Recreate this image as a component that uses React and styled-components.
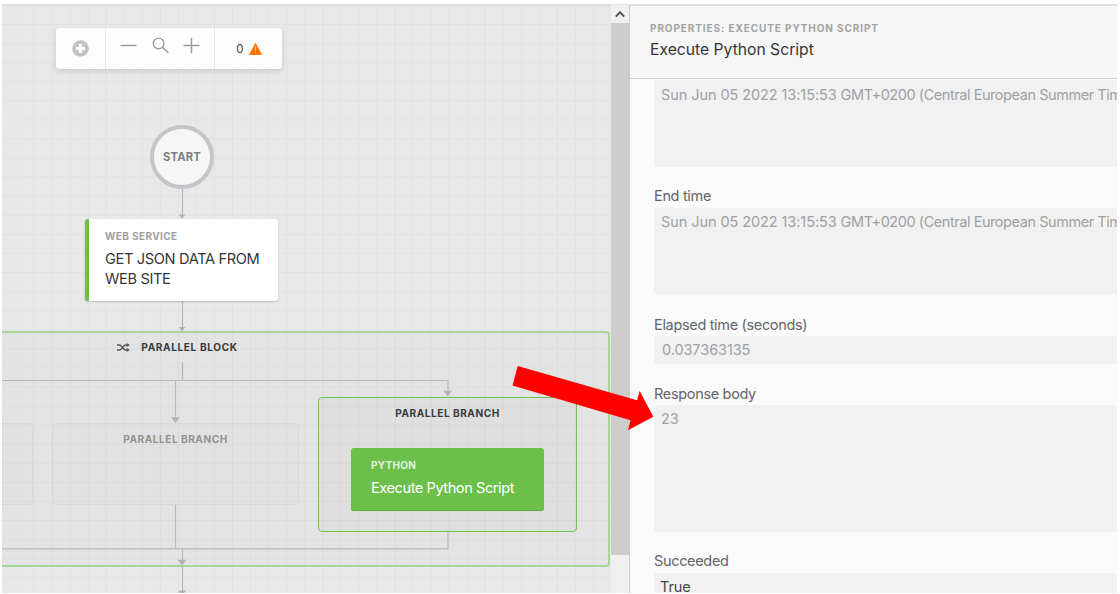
import React from "react";
import styled, { createGlobalStyle } from "styled-components";

const GlobalStyle = createGlobalStyle`
  * { box-sizing: border-box; }
  body { margin: 0; background: #fff; overflow: hidden; font-family: Inter, "Liberation Sans", sans-serif; }
`;

const Page = styled.div`
  position: relative;
  width: 1120px;
  height: 594px;
  padding: 4px 3px 1px 2px;
  overflow: hidden;
  background: #fff;
`;

const Shell = styled.div`
  display: flex;
  height: 589px;
  border-top: 1px solid #e3e3e3;
  overflow: hidden;
`;

const Canvas = styled.main`
  position: relative;
  flex: 0 0 609px;
  overflow: hidden;
  background-color: #e8e8e8;
  background-image:
    linear-gradient(to right, #e1e1e1 1px, transparent 1px),
    linear-gradient(to bottom, #e1e1e1 1px, transparent 1px);
  background-size: 18.05px 19.08px;
  background-position: 13.5px 19px;
  box-shadow: inset 0 1px 0 #dcdcdc;
`;

const Toolbar = styled.div`
  position: absolute;
  left: 54px;
  top: 23px;
  display: flex;
  width: 226px;
  height: 41px;
  background: #fdfdfd;
  border-radius: 3px;
  box-shadow: 0 2px 5px rgba(0, 0, 0, 0.14);
`;

const ToolGroup = styled.div`
  display: flex;
  align-items: center;
  justify-content: center;
  flex: 0 0 ${(p) => p.$width}px;
  gap: ${(p) => p.$gap || 0}px;
  padding-bottom: ${(p) => p.$lift || 0}px;
  padding-left: ${(p) => (p.$last ? 1 : 0)}px;
  border-right: ${(p) => (p.$last ? "0" : "1px solid #e9e9e9")};
  font-size: 11.5px;
  color: #444;
`;

const StartNode = styled.div`
  position: absolute;
  left: 148px;
  top: 120px;
  width: 64px;
  height: 64px;
  display: flex;
  align-items: center;
  justify-content: center;
  border: 4px solid #c4c5c9;
  border-radius: 50%;
  background: #f6f6f6;
  color: #7d7e82;
  font-size: 11.2px;
  font-weight: 700;
  letter-spacing: 0.2px;
`;

const Lines = styled.svg`
  position: absolute;
  left: 0;
  top: 0;
`;

const Card = styled.div`
  position: absolute;
  left: ${(p) => p.$x}px;
  top: ${(p) => p.$y}px;
  width: ${(p) => p.$w}px;
  height: ${(p) => p.$h}px;
  padding: ${(p) => (p.$active ? "11px 20px" : "11px 16px")};
  border-left: ${(p) => (p.$active ? "0" : "4px solid #6cc04a")};
  border-radius: 3px;
  background: ${(p) => (p.$active ? "#6cc04a" : "#fff")};
  color: ${(p) => (p.$active ? "#fff" : "#343537")};
  box-shadow: ${(p) => (p.$active ? "inset 0 -1px 0 #5fab41" : "0 1px 2px rgba(0,0,0,.2)")};
`;

const CardType = styled.div`
  height: 12px;
  line-height: 12px;
  font-size: 10px;
  font-weight: 700;
  letter-spacing: ${(p) => (p.$active ? 0.3 : 0.4)}px;
  opacity: ${(p) => (p.$active ? 0.8 : 1)};
  color: ${(p) => (p.$active ? "#fff" : "#9e9ea2")};
`;

const CardTitle = styled.div`
  margin-top: 7px;
  font-size: 14.6px;
  line-height: 20px;
  letter-spacing: ${(p) => p.$ls}px;
  white-space: nowrap;
`;

const Block = styled.section`
  position: absolute;
  left: ${(p) => p.$x}px;
  top: ${(p) => p.$y}px;
  width: ${(p) => p.$w}px;
  height: ${(p) => p.$h}px;
  border: ${(p) => p.$bw || 1}px solid ${(p) => p.$border};
  border-radius: 4px;
  background: rgba(0, 0, 0, ${(p) => p.$tint});
`;

const BlockTitle = styled.div`
  display: flex;
  align-items: center;
  justify-content: center;
  gap: 11px;
  height: 12px;
  margin-top: ${(p) => p.$top}px;
  padding-right: ${(p) => p.$shift || 0}px;
  color: ${(p) => (p.$muted ? "#929292" : "#3a3b3d")};
  font-size: 10.1px;
  line-height: 12px;
  font-weight: 700;
  letter-spacing: ${(p) => (p.$shift ? 0.62 : 0.52)}px;
  white-space: nowrap;
`;

const Scrollbar = styled.div`
  display: flex;
  flex-direction: column;
  flex: 0 0 18px;
  padding-top: 1px;
  background: #f0f0f0;
`;

const ScrollButton = styled.div`
  display: flex;
  align-items: center;
  justify-content: center;
  height: 17px;
`;

const ScrollThumb = styled.div`
  height: 532px;
  background: #cdcdcd;
`;

const Panel = styled.aside`
  flex: 1;
  min-width: 0;
  display: flex;
  flex-direction: column;
  overflow: hidden;
  background: #fafafa;
  border-left: 1px solid #cbcbcb;
`;

const PanelHeader = styled.header`
  flex: 0 0 74px;
  padding: 16px 0 0 20px;
  background: #f6f6f6;
  border-top: 1px solid #dcdcdc;
  border-bottom: 1px solid #cfcfcf;
`;

const Eyebrow = styled.div`
  height: 12px;
  line-height: 12px;
  font-size: 10px;
  font-weight: 700;
  letter-spacing: 0.9px;
  color: #a2a2a4;
`;

const PanelTitle = styled.h1`
  margin: 6px 0 0;
  font-size: 15.7px;
  line-height: 20px;
  font-weight: 400;
  letter-spacing: 0;
  color: #343537;
`;

const Fields = styled.div`
  padding: 1px 0 0 24px;
`;

const Field = styled.div`
  margin-bottom: ${(p) => p.$gap}px;
`;

const Label = styled.label`
  display: block;
  height: 24px;
  line-height: ${(p) => p.$lh}px;
  font-size: 14.5px;
  letter-spacing: -0.33px;
  color: #646568;
`;

const Value = styled.div`
  height: ${(p) => p.$h}px;
  width: 480px;
  padding-left: ${(p) => p.$pad || 7}px;
  border-radius: 3px;
  background: #f1f1f1;
  color: ${(p) => (p.$dark ? "#49494b" : "#9fa0a3")};
  font-size: 14.5px;
  line-height: ${(p) => p.$lh || 28}px;
  letter-spacing: -0.08px;
  white-space: pre;
`;

const Zone = styled.span`
  letter-spacing: -0.44px;
`;

const Pointer = styled.svg`
  position: absolute;
  left: 0;
  top: 0;
  pointer-events: none;
`;

const AddIcon = () => (
  <svg width="17" height="17" viewBox="0 0 17 17">
    <circle cx="8.5" cy="8.5" r="8.3" fill="#c2c4c7" />
    <path d="M8.5 4v9M4 8.5h9" stroke="#fff" strokeWidth="3.2" />
  </svg>
);

const ZoomOutIcon = () => (
  <svg width="17" height="17" viewBox="0 0 17 17">
    <path d="M.5 8.5h16" stroke="#9b9b9b" strokeWidth="1.4" />
  </svg>
);

const SearchIcon = () => (
  <svg width="17" height="17" viewBox="0 0 17 17" fill="none" stroke="#9b9b9b" strokeWidth="1.4">
    <circle cx="6.6" cy="6.4" r="5.3" />
    <path d="M10.4 10.2l6 5.8" />
  </svg>
);

const ZoomInIcon = () => (
  <svg width="17" height="17" viewBox="0 0 17 17">
    <path d="M.5 8.5h16M8.5.8v15.4" stroke="#9b9b9b" strokeWidth="1.4" />
  </svg>
);

const WarningIcon = () => (
  <svg width="13" height="12" viewBox="0 0 13 12">
    <path d="M6.5.6L12.3 11.4H.7z" fill="#ff7300" stroke="#ff7300" strokeLinejoin="round" />
    <path d="M6.5 3.6v4M6.5 8.7v1.4" stroke="#ffc796" strokeWidth="1.1" />
  </svg>
);

const ShuffleIcon = () => (
  <svg width="13" height="9" viewBox="0 0 13 9" fill="none" stroke="#58595b" strokeWidth="1.5">
    <path d="M0 1.9h2.6C5 1.9 6.2 7 8.6 7h2M0 7h2.6C5 7 6.2 1.9 8.6 1.9h2" />
    <path d="M9.6 0L13 1.9 9.6 4zM9.6 4.9L13 7 9.6 9z" fill="#58595b" stroke="none" />
  </svg>
);

const WIRES = [
  "M180.5 183v27",
  "M180.5 296v27",
  "M180.5 357v18.5",
  "M0 375.5h446v13",
  "M173.5 375.5v37",
  "M173.5 500v43.5",
  "M0 543.8h446v-17",
  "M180.5 543.5v13",
  "M180.5 561v27",
];

const HEADS = [[180, 214, 3.3], [180, 326.5, 3.3], [173.5, 418, 4.3], [445.7, 391.5, 4.3], [180, 560.5, 4.3], [180, 591, 4]];

const Connectors = () => (
  <Lines width="609" height="588">
    {WIRES.map((d) => (
      <path key={d} d={d} fill="none" stroke="#b9b9b9" strokeWidth="1.2" />
    ))}
    {HEADS.map(([x, y, r]) => (
      <path key={`${x}-${y}`} d={`M${x - r} ${y - r * 1.35}h${r * 2}L${x} ${y}z`} fill="#b2b2b2" />
    ))}
  </Lines>
);

const TIME = "Sun Jun 05 2022 13:15:53 ";
const ZONE = "GMT+0200 (Central European Summer Time)";

const FIELDS = [
  { value: TIME, zone: ZONE, h: 87, gap: 17, lh: 29 },
  { label: "End time", labelLh: 24, value: TIME, zone: ZONE, h: 86, gap: 18 },
  { label: "Elapsed time (seconds)", labelLh: 25, value: "0.037363135", h: 28, gap: 17, pad: 8 },
  { label: "Response body", labelLh: 25, value: "23", h: 127, gap: 17 },
  { label: "Succeeded", labelLh: 24, value: "True", h: 28, gap: 0, pad: 6, dark: true },
];

export default function App() {
  return (
    <Page>
      <GlobalStyle />
      <Shell>
        <Canvas>
          <Block $x={-20} $y={326} $w={628} $h={236} $bw={2} $border="#a6d695" $tint={0.018}>
            <BlockTitle $top={8} $shift={237}>
              <ShuffleIcon />
              PARALLEL BLOCK
            </BlockTitle>
          </Block>
          <Block $x={-80} $y={418} $w={111} $h={82} $border="#d8d8d8" $tint={0.008} />
          <Block $x={50} $y={418} $w={247} $h={82} $border="#d8d8d8" $tint={0.008}>
            <BlockTitle $top={8.5} $muted>PARALLEL BRANCH</BlockTitle>
          </Block>
          <Block $x={316} $y={392} $w={259} $h={135} $border="#6fc04f" $tint={0.016}>
            <BlockTitle $top={9}>PARALLEL BRANCH</BlockTitle>
          </Block>
          <Connectors />
          <StartNode>START</StartNode>
          <Card $x={83} $y={214} $w={193} $h={82}>
            <CardType>WEB SERVICE</CardType>
            <CardTitle $ls={-0.35}>
              GET JSON DATA FROM
              <br />
              WEB SITE
            </CardTitle>
          </Card>
          <Card $active $x={349} $y={443} $w={193} $h={63}>
            <CardType $active>PYTHON</CardType>
            <CardTitle $active $ls={-0.45}>Execute Python Script</CardTitle>
          </Card>
          <Toolbar>
            <ToolGroup $width={50}><AddIcon /></ToolGroup>
            <ToolGroup $width={109} $gap={14.5} $lift={7}>
              <ZoomOutIcon />
              <SearchIcon />
              <ZoomInIcon />
            </ToolGroup>
            <ToolGroup $width={67} $gap={5} $last>
              0
              <WarningIcon />
            </ToolGroup>
          </Toolbar>
        </Canvas>
        <Scrollbar>
          <ScrollButton>
            <svg width="10" height="8" viewBox="0 0 10 8">
              <path d="M.8 5.6L5 1.2l4.2 4.4" fill="none" stroke="#555" strokeWidth="2" />
            </svg>
          </ScrollButton>
          <ScrollThumb />
        </Scrollbar>
        <Panel>
          <PanelHeader>
            <Eyebrow>PROPERTIES: EXECUTE PYTHON SCRIPT</Eyebrow>
            <PanelTitle>Execute Python Script</PanelTitle>
          </PanelHeader>
          <Fields>
            {FIELDS.map((f, i) => (
              <Field key={i} $gap={f.gap}>
                {f.label && <Label $lh={f.labelLh}>{f.label}</Label>}
                <Value $h={f.h} $pad={f.pad} $lh={f.lh} $dark={f.dark}>
                  {f.value}
                  {f.zone && <Zone>{f.zone}</Zone>}
                </Value>
              </Field>
            ))}
          </Fields>
        </Panel>
      </Shell>
      <Pointer width="1120" height="594">
        <path d="M517.7 366L637 400.3l2.7-9.3 13.6 25.7L628 430.3l2.5-10L512.5 385.6z" fill="#f00" />
      </Pointer>
    </Page>
  );
}
